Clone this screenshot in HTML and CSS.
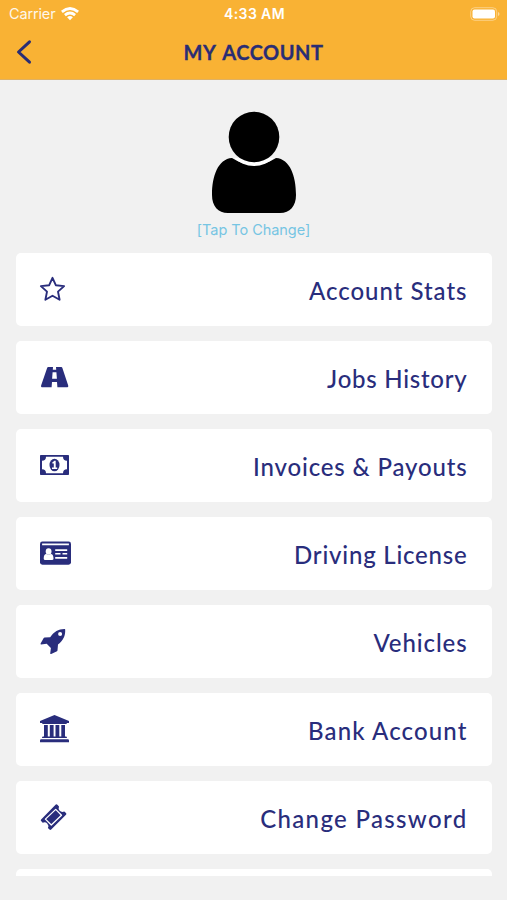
FILE: index.html
```html
<!DOCTYPE html>
<html lang="en">
<head>
<meta charset="utf-8">
<title>My Account</title>
<link rel="stylesheet" href="styles.css">
</head>
<body>
<header class="top">
  <div class="status">
    <div class="carrier"><span class="carrier-name">Carrier</span>
      <svg class="wifi" width="18" height="14" viewBox="0 0 18 14" fill="none" stroke="#fff" stroke-width="2.8"><path d="M.9 4.8Q9-1.9 17.1 4.8M3.9 8.1Q9 3.9 14.1 8.1"/><path d="M9 13.3L6.1 10.2Q9 7.9 11.9 10.2Z" fill="#fff" stroke="none"/></svg>
    </div>
    <time class="clock">4:33 AM</time>
    <svg class="battery" width="30" height="14" viewBox="0 0 30 14"><rect x=".7" y=".7" width="26" height="12.6" rx="4" fill="none" stroke="#fff" stroke-opacity=".4" stroke-width="1"/><rect x="2.5" y="2.5" width="22.5" height="9" rx="2" fill="#fff"/><path d="M28 5v4q1.5-.6 1.5-2T28 5" fill="#fff" opacity=".5"/></svg>
  </div>
  <div class="nav">
    <svg class="back" width="18" height="26" viewBox="0 0 18 26" fill="none" stroke="#2a2d74" stroke-width="3" stroke-linecap="round" stroke-linejoin="round"><path d="M14.5 2.8L3.5 13l11 10.2"/></svg>
    <h1 class="title">MY ACCOUNT</h1>
  </div>
</header>
<section class="profile">
  <svg class="avatar" width="86" height="103" viewBox="0 0 86 103"><path d="M21 47C7 48 1 65 1 84C1 95 7 102 17 102H69C79 102 85 95 85 84C85 65 79 48 65 47Q43 61 21 47Z"/><circle cx="43" cy="26" r="29" fill="#fff"/><path d="M0 0H86V47H0Z" fill="#f1f1f1"/><circle cx="43" cy="26" r="25.3"/></svg>
  <a class="change">[Tap To Change]</a>
</section>
<main class="list">
  <div class="card"><svg class="icon" viewBox="0 0 36 32" fill="none" stroke="#292d7c" stroke-width="1.9" stroke-linejoin="round"><path d="M14.5 3.8l3.3 7.4 8.3.9-6.1 5.5 1.6 8.2-7.1-4.1-7.1 4.1L9 17.6l-6.1-5.5 8.3-.9z"/></svg><span class="label stats">Account Stats</span></div>
  <div class="card"><svg class="icon" viewBox="0 0 36 32"><path fill="#292d7c" fill-rule="evenodd" d="M10.2 5H15L14.8 7.7H18.2L18 5H23.3Q24 5 24.3 5.8L30.2 23.6Q30.6 25.3 29.5 25.3H19.4L19 20H14L13.6 25.3H3.8Q2.7 25.3 3.1 23.6L9.2 5.8Q9.5 5 10.2 5ZM14.6 10.2L14.1 16.8H18.9L18.4 10.2Z"/></svg><span class="label jobs">Jobs History</span></div>
  <div class="card"><svg class="icon" viewBox="0 0 36 32"><path fill="#292d7c" fill-rule="evenodd" d="M2.8 5H30.2Q31 5 31 5.8V24.2Q31 25 30.2 25H2.8Q2 25 2 24.2V5.8Q2 5 2.8 5ZM8 6.8Q8 10.8 4 10.8V19.2Q8 19.2 8 23.2H25Q25 19.2 29 19.2V10.8Q25 10.8 25 6.8Z"/><ellipse cx="16.5" cy="15" rx="5" ry="6.3" fill="#292d7c"/><path d="M14.1 12.7L16.4 10.8H17.7V17.5H19.2V19H14V17.5H15.8V13.2L14.9 13.8Z" fill="#fff"/></svg><span class="label invoices">Invoices &amp; Payouts</span></div>
  <div class="card"><svg class="icon" viewBox="0 0 36 32"><rect x="2" y="3.5" width="31" height="23.2" rx="2.4" fill="#292d7c"/><path fill="#fff" d="M4.1 5.5H30.9V7.2H4.1ZM17.2 11.2H29.2V12.9H17.2ZM17.2 15H22.5V16.6H17.2ZM24.5 15H29.2V16.6H24.5ZM17.2 19H29.2V20.7H17.2ZM5.7 20.8C5.7 17.8 6.5 16 8.4 16Q10.6 17.6 12.8 16C14.7 16 15.5 17.8 15.5 20.8Q15.5 22.1 14 22.1H7.2Q5.7 22.1 5.7 20.8Z"/><ellipse cx="10.6" cy="13.5" rx="2.9" ry="3.2" fill="#fff"/></svg><span class="label license">Driving License</span></div>
  <div class="card"><svg class="icon" viewBox="0 0 36 32"><path fill="#292d7c" fill-rule="evenodd" d="M26.7 3.1Q27.2 3.1 27.2 3.7C27.4 9.8 25.5 14 20 18.6L19.5 24.2Q19.5 24.8 19 25.2L13.2 28Q12.5 28.2 12.2 27.4L12.9 21.9L8.7 17.8L3.1 18.6Q2.3 18.4 2.6 17.6L5.7 12.1Q6 11.7 6.6 11.6L12.2 11.2C16.3 5.7 20.3 3 26.7 3.1ZM22.1 6.1A2 2 0 1 0 22.1 10.1A2 2 0 1 0 22.1 6.1Z"/></svg><span class="label vehicles">Vehicles</span></div>
  <div class="card"><svg class="icon" viewBox="0 0 36 32" fill="#292d7c"><path d="M16.5 1.1L31 7V9H29Q29 10 27.8 10H5.2Q4 10 4 9H2V7ZM6 11H9.8V22.6H11.8V11H15.6V22.6H17.5V11H21.3V22.6H23.3V11H27V22.6H27.8Q29 22.6 29 24H4Q4 22.6 5.2 22.6H6ZM3.2 25.3H29.8Q31 25.3 31 26.5V28.2H2V26.5Q2 25.3 3.2 25.3Z"/></svg><span class="label bank">Bank Account</span></div>
  <div class="card"><svg class="icon" viewBox="0 0 36 32"><path fill="#292d7c" d="M17.8 2.5Q18.6 1.9 19.4 2.7L21 4.4Q19.9 7.1 21.7 8.8Q23.6 10.6 26.3 9.5L28 11.1Q28.8 12 28 12.8L13.2 27.5Q12.4 28.3 11.5 27.5L9.9 25.9Q11 23.2 9.2 21.4Q7.4 19.6 4.7 20.7L3.1 19.1Q2.3 18.2 3.1 17.4Z"/><path d="M17.7 7.4L23.5 13.2L13.3 23L7.4 17.1Z" fill="none" stroke="#fff" stroke-width="1.3" stroke-linejoin="round"/></svg><span class="label password">Change Password</span></div>
  <div class="card"></div>
</main>
</body>
</html>
```
FILE: styles.css
```css
* { box-sizing: border-box; }
body { margin: 0; height: 900px; overflow: hidden; background: #f1f1f1; font-family: Inter, sans-serif; }
.top { height: 80px; background: #f9b234; border-bottom: 1px solid #dfb164; }
.status { height: 27px; display: grid; grid-template-columns: 1fr auto 1fr; align-items: center; padding: 0 7px 0 9px; color: #fff; font-size: 14px; }
.carrier { display: flex; align-items: center; gap: 6px; }
.carrier-name { font-size: 14.5px; letter-spacing: -.15px; opacity: .9; }
.clock { font-weight: 600; font-size: 14px; letter-spacing: .4px; }
.battery { justify-self: end; }
.nav { height: 50px; display: grid; grid-template-columns: 34px 1fr 34px; align-items: center; padding: 0 15px; }
.title { margin: 0; text-align: center; color: #2a2d74; font: 700 20px Lato, sans-serif; letter-spacing: .5px; word-spacing: 2px; -webkit-text-stroke: .3px #2a2d74; }
.profile { height: 173px; padding-top: 31px; display: flex; flex-direction: column; align-items: center; }
.avatar { display: block; flex: none; }
.change { margin-top: 7px; color: #76c5e3; font-size: 14.5px; line-height: 18px; letter-spacing: -.05px; white-space: nowrap; }
.list { height: 623px; overflow: hidden; padding: 0 15px 0 16px; display: flex; flex-direction: column; gap: 14.6px; }
.card { flex: none; height: 73.4px; border-radius: 5px; background: #fff; display: flex; justify-content: space-between; align-items: flex-start; padding: 21px 24.5px 0 22px; }
.icon { width: 36px; height: 32px; flex: none; }
.label { color: #292d7c; font: 500 24px/34px Lato, sans-serif; white-space: nowrap; }
.stats { letter-spacing: .98px; }
.jobs { letter-spacing: .75px; }
.invoices { letter-spacing: .85px; }
.license { letter-spacing: .78px; }
.vehicles { letter-spacing: .9px; }
.bank { letter-spacing: 1.12px; }
.password { letter-spacing: 1.34px; }
```
